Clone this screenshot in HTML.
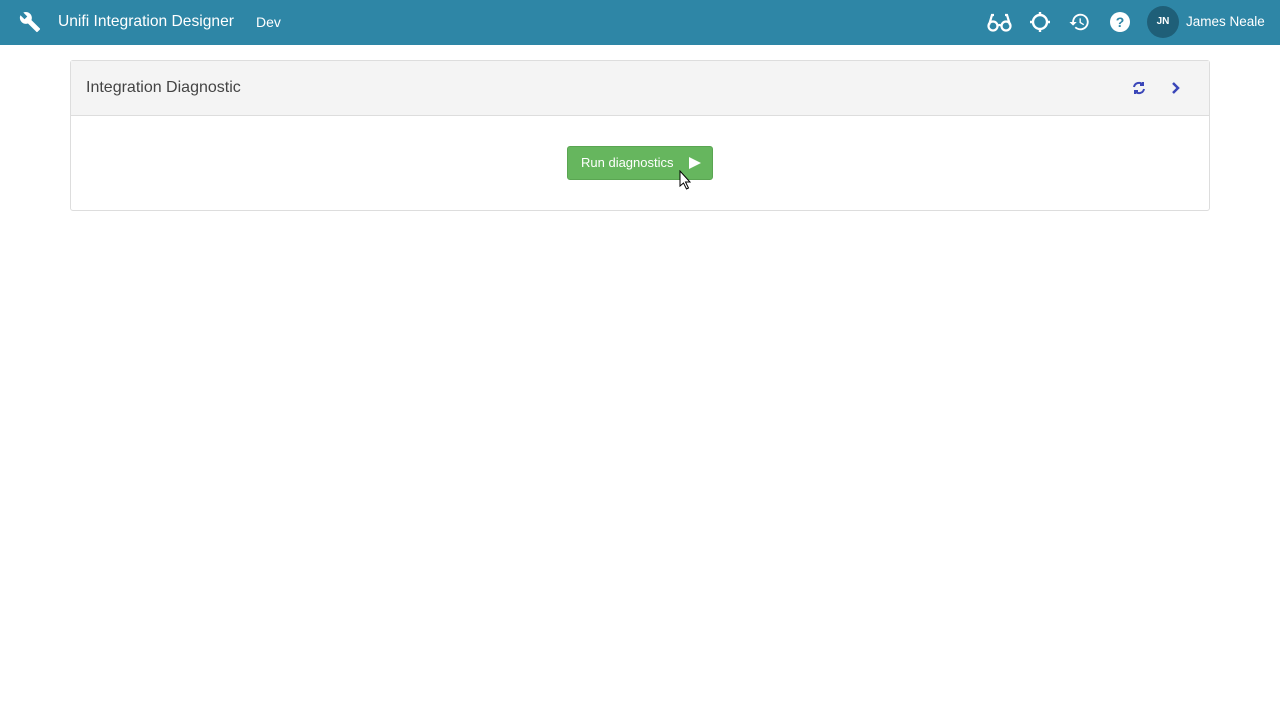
<!DOCTYPE html>
<html><head><style>
body{margin:0;width:1280px;height:720px;background:#fff;font-family:"Liberation Sans",sans-serif;position:relative;overflow:hidden}
.top{position:absolute;left:0;top:0;width:1280px;height:45px;background:#2e86a6;color:#fff}
.abs{position:absolute}
.card{position:absolute;left:70px;top:60px;width:1140px;height:151px;border:1px solid #ddd;border-radius:3px;box-sizing:border-box}
.hd{height:54px;background:#f4f4f4;border-bottom:1px solid #ddd}
.btn{position:absolute;left:567px;top:146px;width:146px;height:34px;background:#66b65e;border:1px solid #5aa552;border-radius:3px;box-sizing:border-box;color:#fff;font-size:13px;line-height:32px}
</style></head><body>
<div class="top">
<svg class="abs" style="left:18px;top:11px" width="24" height="22" viewBox="0 0 24 24"><path fill="#fff" d="M22.7 19l-9.1-9.1c.9-2.3.4-5-1.5-6.9-2-2-5-2.4-7.4-1.3L9 6 6 9 1.6 4.7C.4 7.1.9 10.1 2.9 12.1c1.9 1.9 4.6 2.4 6.9 1.5l9.1 9.1c.4.4 1 .4 1.4 0l2.3-2.3c.5-.4.5-1.1.1-1.4z"/></svg>
<div class="abs" style="left:58px;top:13px;font-size:15.6px">Unifi Integration Designer</div>
<div class="abs" style="left:256px;top:14px;font-size:14px">Dev</div>
<svg class="abs" style="left:987px;top:12px" width="25" height="20" viewBox="0 0 25 20" fill="none" stroke="#fff" stroke-width="2.2"><circle cx="6" cy="14" r="4.5"/><circle cx="19" cy="14" r="4.5"/><path d="M10.5 14q2-2 4 0M2 13L5 3h2M23 13L20 3h-2"/></svg>
<svg class="abs" style="left:1029px;top:11px" width="22" height="22" viewBox="0 0 22 22" fill="none" stroke="#fff" stroke-width="2.4"><circle cx="11" cy="11" r="7"/><path d="M11 1v4M11 17v4M1 11h4M17 11h4"/></svg>
<svg class="abs" style="left:1068px;top:11px" width="23" height="22" viewBox="0 0 24 24" fill="#fff"><path d="M13 3a9 9 0 0 0-9 9H1l4 4 4-4H6a7 7 0 1 1 2.1 5l-1.4 1.4A9 9 0 1 0 13 3zm-1 5v5l4.3 2.5.7-1.2-3.5-2.1V8z"/></svg>
<svg class="abs" style="left:1109px;top:11px" width="22" height="22" viewBox="0 0 22 22"><circle cx="11" cy="11" r="10" fill="#fff"/><text x="11" y="16" text-anchor="middle" font-size="14" font-weight="bold" fill="#2e86a6" font-family="Liberation Sans">?</text></svg>
<div class="abs" style="left:1147px;top:6px;width:32px;height:32px;border-radius:50%;background:#1f5f78;font-size:10px;font-weight:bold;text-align:center;line-height:32px">JN</div>
<div class="abs" style="left:1186px;top:14px;font-size:13.5px">James Neale</div>
</div>
<div class="card"><div class="hd"><div class="abs" style="left:15px;top:18px;font-size:16px;color:#444">Integration Diagnostic</div>
<svg class="abs" style="left:1061px;top:20px" width="14" height="14" viewBox="0 0 14 14" fill="none" stroke="#3a46b8" stroke-width="2"><path d="M2 6a5 5 0 0 1 9-2M12 8a5 5 0 0 1-9 2"/><path d="M11 1v3H8M3 13v-3h3" /></svg>
<svg class="abs" style="left:1100px;top:20px" width="10" height="14" viewBox="0 0 10 14" fill="none" stroke="#3a46b8" stroke-width="2.5"><path d="M2 2l5 5-5 5"/></svg>
</div></div>
<div class="btn"><span style="position:absolute;left:13px">Run diagnostics</span><svg class="abs" style="left:121px;top:10px" width="12" height="12"><path d="M0 0L12 6 0 12z" fill="#fff"/></svg></div>
<svg class="abs" style="left:679px;top:170px" width="12" height="20" viewBox="0 0 12 20"><path d="M1 1v15l3.5-3 3 6 2-1-3-6h4.5z" fill="#fff" stroke="#000"/></svg>
</body></html>
